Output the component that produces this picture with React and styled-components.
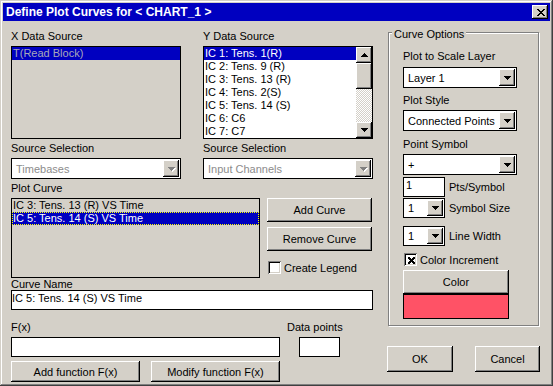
import React from 'react';
import styled, { createGlobalStyle, css } from 'styled-components';

const FACE = '#d4d0c8';
const SELECT = '#0000c0';

const GlobalStyle = createGlobalStyle`
  html, body { margin: 0; padding: 0; background: ${FACE}; }
  body {
    font-family: "Liberation Sans", Arial, sans-serif;
    font-size: 11px;
    color: #000;
  }
  * { box-sizing: border-box; }
`;

const raised = css`
  background: ${FACE};
  box-shadow: inset -1px -1px #000, inset 1px 1px #fff, inset -2px -2px #808080;
`;

const Y_ITEMS = [
  'IC 1: Tens. 1(R)',
  'IC 2: Tens. 9 (R)',
  'IC 3: Tens. 13 (R)',
  'IC 4: Tens. 2(S)',
  'IC 5: Tens. 14 (S)',
  'IC 6: C6',
  'IC 7: C7',
];

function Arrow({ dir = 'down', disabled }) {
  const down = 'M0 0H7V1H6V2H5V3H4V4H3V3H2V2H1V1H0Z';
  const up = 'M3 0H4V1H5V2H6V3H7V4H0V3H1V2H2V1H3Z';
  const d = dir === 'down' ? down : up;
  return (
    <svg width="8" height="5" viewBox="0 0 8 5">
      {disabled && <path d={d} fill="#fff" transform="translate(1 1)" />}
      <path d={d} fill={disabled ? '#808080' : '#000'} />
    </svg>
  );
}

function CloseIcon() {
  return (
    <svg width="8" height="7" viewBox="0 0 8 7">
      <path
        d="M0 0h2v1h-2zM6 0h2v1h-2zM1 1h2v1h-2zM5 1h2v1h-2zM2 2h4v1h-4zM3 3h2v1h-2zM2 4h4v1h-4zM1 5h2v1h-2zM5 5h2v1h-2zM0 6h2v1h-2zM6 6h2v1h-2z"
        fill="#000"
      />
    </svg>
  );
}

function CheckMark() {
  return (
    <svg width="7" height="7" viewBox="0 0 7 7">
      <path
        d="M0 0h2v1h-2zM5 0h2v1h-2zM0 1h3v1h-3zM4 1h3v1h-3zM1 2h5v1h-5zM2 3h3v1h-3zM1 4h5v1h-5zM0 5h3v1h-3zM4 5h3v1h-3zM0 6h2v1h-2zM5 6h2v1h-2z"
        fill="#000"
      />
    </svg>
  );
}

function Combo({ text, width, height = 21, disabled }) {
  return (
    <ComboBox $width={width} $height={height}>
      <ComboText $disabled={disabled}>{text}</ComboText>
      <DropButton>
        <Arrow disabled={disabled} />
      </DropButton>
    </ComboBox>
  );
}

function Check({ checked, children, mt }) {
  return (
    <CheckRow $mt={mt}>
      <CheckBox>{checked && <CheckMark />}</CheckBox>
      <span>{children}</span>
    </CheckRow>
  );
}

export default function App() {
  return (
    <>
      <GlobalStyle />
      <Window>
        <TitleBar>
          <TitleText>Define Plot Curves for &lt; CHART_1 &gt;</TitleText>
          <CloseButton>
            <CloseIcon />
          </CloseButton>
        </TitleBar>
        <Body>
          <LeftPane>
            <SourceRow>
              <Column>
                <Label>X Data Source</Label>
                <ListBox $height={93} $bg={FACE}>
                  <Items>
                    <Item $selected $dim>T(Read Block)</Item>
                  </Items>
                </ListBox>
              </Column>
              <Column>
                <Label>Y Data Source</Label>
                <ListBox $height={93}>
                  <Items>
                    {Y_ITEMS.map((t, i) => (
                      <Item key={t} $selected={i === 0}>
                        {t}
                      </Item>
                    ))}
                  </Items>
                  <ScrollBar>
                    <ScrollButton>
                      <Arrow dir="up" />
                    </ScrollButton>
                    <Thumb />
                    <Track />
                    <ScrollButton>
                      <Arrow />
                    </ScrollButton>
                  </ScrollBar>
                </ListBox>
              </Column>
            </SourceRow>

            <SourceRow $mt={3}>
              <Column>
                <Label>Source Selection</Label>
                <Combo text="Timebases" disabled />
              </Column>
              <Column>
                <Label>Source Selection</Label>
                <Combo text="Input Channels" disabled />
              </Column>
            </SourceRow>

            <Label $mt={3}>Plot Curve</Label>
            <CurveRow>
              <ListBox $height={80} $width={249} $bg={FACE}>
                <Items>
                  <Item>IC 3: Tens. 13 (R) VS Time</Item>
                  <Item $selected $focus>IC 5: Tens. 14 (S) VS Time</Item>
                </Items>
              </ListBox>
              <CurveButtons>
                <PushButton $width={105} $height={24}>Add Curve</PushButton>
                <PushButton $width={105} $height={24} $mt={5}>Remove Curve</PushButton>
                <Check mt={10}>Create Legend</Check>
              </CurveButtons>
            </CurveRow>

            <Label $height={12} $mb={0}>Curve Name</Label>
            <TextBox>IC 5: Tens. 14 (S) VS Time</TextBox>

            <FxRow>
              <FieldColumn $width={269}>
                <Label>F(x)</Label>
                <TextBox />
              </FieldColumn>
              <FieldColumn $ml={7}>
                <Label>Data points</Label>
                <TextBox $width={41} $ml={12} />
              </FieldColumn>
            </FxRow>

            <FnButtons>
              <PushButton $width={129} $height={21}>Add function F(x)</PushButton>
              <PushButton $width={129} $height={21}>Modify function F(x)</PushButton>
            </FnButtons>
          </LeftPane>

          <RightPane>
            <GroupBox>
              <Legend>Curve Options</Legend>
              <Label $mb={4}>Plot to Scale Layer</Label>
              <Combo text="Layer 1" width={114} />
              <Label $mt={6}>Plot Style</Label>
              <Combo text="Connected Points" width={114} />
              <Label $mt={7}>Point Symbol</Label>
              <Combo text="+" width={114} />
              <OptionRow $mt={2}>
                <TextBox $width={42} $pl={2}>1</TextBox>
                <span>Pts/Symbol</span>
              </OptionRow>
              <OptionRow $mt={1}>
                <Combo text="1" width={42} height={20} />
                <span>Symbol Size</span>
              </OptionRow>
              <OptionRow $mt={8}>
                <Combo text="1" width={42} height={20} />
                <span>Line Width</span>
              </OptionRow>
              <Check checked mt={7}>Color Increment</Check>
              <PushButton $width={106} $height={24} $mt={4}>Color</PushButton>
              <Swatch />
            </GroupBox>
            <DialogButtons>
              <PushButton $width={66} $height={26}>OK</PushButton>
              <PushButton $width={65} $height={26}>Cancel</PushButton>
            </DialogButtons>
          </RightPane>
        </Body>
      </Window>
    </>
  );
}

const Window = styled.div`
  width: 553px;
  height: 386px;
  padding: 3px;
  background: ${FACE};
  box-shadow: inset -1px -1px #404040, inset 1px 1px ${FACE}, inset -2px -2px #808080,
    inset 2px 2px #fff;
  display: flex;
  flex-direction: column;
`;

const TitleBar = styled.div`
  height: 18px;
  background: ${SELECT};
  display: flex;
  align-items: center;
  justify-content: space-between;
  padding: 0 2px 0 3px;
`;

const TitleText = styled.span`
  color: #fff;
  font-weight: bold;
  font-size: 12px;
  line-height: 18px;
  white-space: nowrap;
`;

const CloseButton = styled.div`
  ${raised};
  width: 16px;
  height: 14px;
  display: flex;
  align-items: center;
  justify-content: center;
  padding-left: 1px;
`;

const Body = styled.div`
  display: flex;
  gap: 14px;
  padding-left: 8px;
`;

const LeftPane = styled.div`
  width: 362px;
  margin-top: 9px;
  display: flex;
  flex-direction: column;
`;

const SourceRow = styled.div`
  display: flex;
  gap: 22px;
  margin-top: ${p => p.$mt || 0}px;
`;

const Column = styled.div`
  width: 170px;
  display: flex;
  flex-direction: column;
`;

const Label = styled.div`
  height: ${p => p.$height || 13}px;
  line-height: ${p => p.$height || 13}px;
  margin-top: ${p => p.$mt || 0}px;
  margin-bottom: ${p => (p.$mb === undefined ? 3 : p.$mb)}px;
  white-space: nowrap;
`;

const ListBox = styled.div`
  height: ${p => p.$height}px;
  width: ${p => (p.$width ? `${p.$width}px` : '100%')};
  flex-shrink: 0;
  border: 1px solid #000;
  background: ${p => p.$bg || '#fff'};
  display: flex;
  overflow: hidden;
`;

const Items = styled.div`
  flex: 1;
  display: flex;
  flex-direction: column;
  overflow: hidden;
`;

const Item = styled.div`
  height: 13px;
  line-height: 13px;
  padding-left: 1px;
  white-space: nowrap;
  background: ${p => (p.$selected ? SELECT : 'transparent')};
  color: ${p => (p.$selected ? (p.$dim ? '#a8a8b8' : '#fff') : '#000')};
  ${p =>
    p.$focus &&
    css`
      outline: 1px dotted #ffff00;
      outline-offset: -1px;
    `}
`;

const ScrollBar = styled.div`
  width: 16px;
  display: flex;
  flex-direction: column;
`;

const ScrollButton = styled.div`
  ${raised};
  height: 16px;
  display: flex;
  align-items: center;
  justify-content: center;
  padding-left: 1px;
`;

const Thumb = styled.div`
  ${raised};
  height: 26px;
`;

const Track = styled.div`
  flex: 1;
  background: repeating-conic-gradient(#fff 0 25%, ${FACE} 0 50%) 0 0 / 2px 2px;
`;

const ComboBox = styled.div`
  width: ${p => (p.$width ? `${p.$width}px` : '100%')};
  height: ${p => p.$height}px;
  flex-shrink: 0;
  border: 1px solid #000;
  background: #fff;
  padding: 1px;
  display: flex;
  align-items: center;
`;

const ComboText = styled.span`
  flex: 1;
  padding-left: 3px;
  white-space: nowrap;
  overflow: hidden;
  color: ${p => (p.$disabled ? '#8c8c8c' : '#000')};
`;

const DropButton = styled.div`
  ${raised};
  width: 16px;
  height: 100%;
  display: flex;
  align-items: center;
  justify-content: center;
  padding: 1px 0 0 1px;
`;

const CurveRow = styled.div`
  display: flex;
  gap: 7px;
`;

const CurveButtons = styled.div`
  display: flex;
  flex-direction: column;
`;

const PushButton = styled.div`
  ${raised};
  width: ${p => p.$width}px;
  height: ${p => p.$height}px;
  margin-top: ${p => p.$mt || 0}px;
  flex-shrink: 0;
  display: flex;
  align-items: center;
  justify-content: center;
  white-space: nowrap;
`;

const CheckRow = styled.div`
  display: flex;
  align-items: center;
  gap: 3px;
  height: 13px;
  margin-top: ${p => p.$mt || 0}px;
  padding-left: 1px;
  white-space: nowrap;
`;

const CheckBox = styled.div`
  width: 13px;
  height: 13px;
  background: #fff;
  box-shadow: inset 1px 1px #808080, inset -1px -1px #fff, inset 2px 2px #000,
    inset -2px -2px ${FACE};
  display: flex;
  align-items: center;
  justify-content: center;
  padding: 1px 0 0 1px;
`;

const TextBox = styled.div`
  width: ${p => (p.$width ? `${p.$width}px` : '100%')};
  height: 20px;
  margin-left: ${p => p.$ml || 0}px;
  flex-shrink: 0;
  border: 1px solid #000;
  background: #fff;
  padding-left: ${p => p.$pl || 0}px;
  line-height: 14px;
  white-space: nowrap;
`;

const FxRow = styled.div`
  display: flex;
  margin-top: 11px;
`;

const FieldColumn = styled.div`
  display: flex;
  flex-direction: column;
  width: ${p => (p.$width ? `${p.$width}px` : 'auto')};
  margin-left: ${p => p.$ml || 0}px;
`;

const FnButtons = styled.div`
  display: flex;
  gap: 11px;
  margin-top: 4px;
`;

const RightPane = styled.div`
  width: 153px;
  display: flex;
  flex-direction: column;
`;

const GroupBox = styled.div`
  position: relative;
  margin: 11px 0 0 1px;
  width: 151px;
  border: 1px solid #808080;
  box-shadow: 1px 1px 0 #fff, inset 1px 1px 0 #fff;
  padding: 17px 0 6px 14px;
  display: flex;
  flex-direction: column;
`;

const Legend = styled.span`
  position: absolute;
  top: -5px;
  left: 3px;
  padding: 0 2px;
  background: ${FACE};
  line-height: 13px;
  white-space: nowrap;
`;

const OptionRow = styled.div`
  display: flex;
  align-items: center;
  gap: 4px;
  margin-top: ${p => p.$mt || 0}px;
  white-space: nowrap;
`;

const Swatch = styled.div`
  width: 106px;
  height: 25px;
  background: #ff5266;
  border: 1px solid #000;
`;

const DialogButtons = styled.div`
  display: flex;
  gap: 22px;
  margin-top: 20px;
`;
